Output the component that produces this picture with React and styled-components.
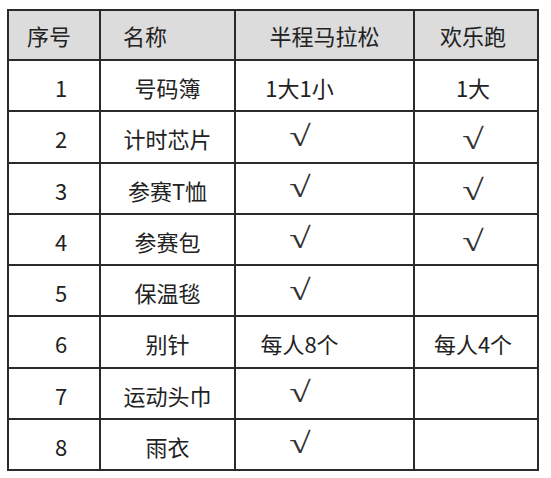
import React from 'react';
import styled, { createGlobalStyle } from 'styled-components';

const GlobalStyle = createGlobalStyle`
  html, body {
    margin: 0;
    padding: 0;
    background: #ffffff;
  }
  body {
    font-family: 'Noto Sans CJK SC', 'Noto Sans', sans-serif;
    color: #222;
  }
`;

const rows = [
  { no: '1', name: '号码簿', half: '1大1小', fun: '1大' },
  { no: '2', name: '计时芯片', half: '√', fun: '√' },
  { no: '3', name: '参赛T恤', half: '√', fun: '√' },
  { no: '4', name: '参赛包', half: '√', fun: '√' },
  { no: '5', name: '保温毯', half: '√', fun: '' },
  { no: '6', name: '别针', half: '每人8个', fun: '每人4个' },
  { no: '7', name: '运动头巾', half: '√', fun: '' },
  { no: '8', name: '雨衣', half: '√', fun: '' },
];

export default function App() {
  const renderValue = (value, lower) =>
    value === '√' ? <Check lower={lower}>√</Check> : value;

  return (
    <>
      <GlobalStyle />
      <Page>
        <Table>
          <colgroup>
            <col style={{ width: 92 }} />
            <col style={{ width: 135 }} />
            <col style={{ width: 179 }} />
            <col style={{ width: 124 }} />
          </colgroup>
          <thead>
            <HeadRow>
              <HeadCell padRight="10px">序号</HeadCell>
              <HeadCell align="left" padLeft="22px">
                名称
              </HeadCell>
              <HeadCell>半程马拉松</HeadCell>
              <HeadCell padRight="6px">欢乐跑</HeadCell>
            </HeadRow>
          </thead>
          <tbody>
            {rows.map(row => (
              <BodyRow key={row.no}>
                <Cell padLeft="14px">{row.no}</Cell>
                <Cell>{row.name}</Cell>
                <Cell padRight="50px">{renderValue(row.half)}</Cell>
                <Cell padRight="6px">{renderValue(row.fun, true)}</Cell>
              </BodyRow>
            ))}
          </tbody>
        </Table>
      </Page>
    </>
  );
}

const Page = styled.div`
  padding: 9px 0 0 7px;
`;

const Table = styled.table`
  border-collapse: collapse;
  table-layout: fixed;
  width: 532px;
  font-size: 22px;
  line-height: 1;

  td,
  th {
    border: 2px solid #2a2a2a;
  }
`;

const HeadRow = styled.tr`
  height: 50px;
  background: #dcdcdc;
`;

const BodyRow = styled.tr`
  height: 51.25px;
  background: #ffffff;
`;

const HeadCell = styled.th`
  font-weight: 400;
  text-align: ${props => props.align || 'center'};
  padding: 0 ${props => props.padRight || '0'} 0 ${props => props.padLeft || '0'};
  vertical-align: middle;
`;

const Cell = styled.td`
  text-align: ${props => props.align || 'center'};
  padding: 3px ${props => props.padRight || '0'} 0 ${props => props.padLeft || '0'};
  vertical-align: middle;
`;

const Check = styled.span`
  display: inline-block;
  font-family: 'Liberation Serif', 'DejaVu Serif', serif;
  font-size: 29px;
  color: #333;
  transform: translateY(${props => (props.lower ? '1px' : '-2px')}) scaleX(1.35);
`;
